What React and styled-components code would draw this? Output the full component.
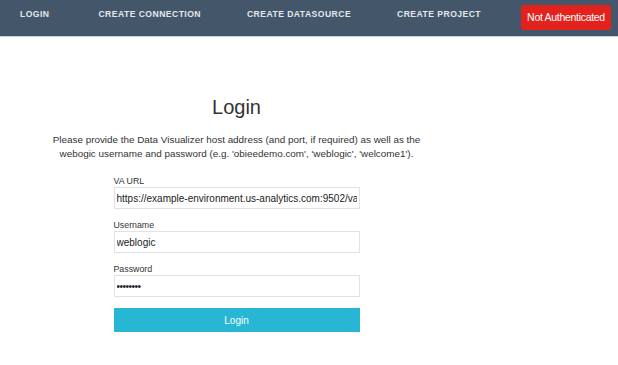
import React from "react";
import styled, { createGlobalStyle } from "styled-components";

const GlobalStyle = createGlobalStyle`
  html, body {
    margin: 0;
    padding: 0;
    background: #ffffff;
    font-family: "Liberation Sans", Arial, sans-serif;
  }
`;

const NavBar = styled.header`
  height: 37px;
  background: #44576a;
  border-bottom: 1px solid #c9d3da;
  display: flex;
  align-items: center;
  padding: 0 7px 0 20px;
  box-sizing: border-box;
`;

const NavLinks = styled.nav`
  display: flex;
  align-items: center;
  gap: 46px;
  flex: 1;
  margin-top: -8px;
`;

const NavLink = styled.a`
  color: #e3e8ec;
  font-size: 8.6px;
  font-weight: bold;
  letter-spacing: 0.45px;
  text-transform: uppercase;
  text-decoration: none;
  white-space: nowrap;
  cursor: pointer;

  &:first-child {
    margin-right: 3px;
  }
`;

const StatusBadge = styled.span`
  background: #e3221d;
  color: #ffffff;
  font-size: 10.5px;
  letter-spacing: -0.3px;
  white-space: nowrap;
  border-radius: 3px;
  height: 25px;
  width: 90px;
  box-sizing: border-box;
  display: flex;
  align-items: center;
  justify-content: center;
  margin-top: -2px;
`;

const Main = styled.main`
  width: 473px;
  display: flex;
  flex-direction: column;
  align-items: center;
  padding-top: 59px;
`;

const Title = styled.h1`
  margin: 0;
  font-size: 20px;
  font-weight: normal;
  color: #333333;
`;

const Intro = styled.p`
  margin: 14px 0 0;
  font-size: 9.9px;
  line-height: 14px;
  color: #333333;
  text-align: center;
`;

const Form = styled.form`
  width: 246px;
  margin-top: 15px;
  display: flex;
  flex-direction: column;
`;

const Field = styled.div`
  display: flex;
  flex-direction: column;
  margin-bottom: 11px;
`;

const Label = styled.label`
  font-size: 8.8px;
  line-height: 10px;
  color: #333333;
  margin-bottom: 1px;
`;

const Input = styled.input`
  height: 22px;
  box-sizing: border-box;
  border: 1px solid #e2e2e2;
  padding: 0 2px;
  font-family: "Liberation Sans", Arial, sans-serif;
  font-size: 10px;
  color: #222222;
  outline: none;
  letter-spacing: ${(p) => (p.type === "password" ? "-0.5px" : "normal")};
`;

const SubmitButton = styled.button`
  height: 24px;
  border: none;
  background: #27b6d4;
  color: #ffffff;
  font-family: "Liberation Sans", Arial, sans-serif;
  font-size: 10px;
  cursor: pointer;
`;

const links = ["Login", "Create Connection", "Create Datasource", "Create Project"];

export default function App() {
  return (
    <>
      <GlobalStyle />
      <NavBar>
        <NavLinks>
          {links.map((l) => (
            <NavLink key={l}>{l}</NavLink>
          ))}
        </NavLinks>
        <StatusBadge>Not Authenticated</StatusBadge>
      </NavBar>
      <Main>
        <Title>Login</Title>
        <Intro>
          Please provide the Data Visualizer host address (and port, if required) as well as the
          <br />
          webogic username and password (e.g. 'obieedemo.com', 'weblogic', 'welcome1').
        </Intro>
        <Form onSubmit={(e) => e.preventDefault()}>
          <Field>
            <Label>VA URL</Label>
            <Input defaultValue="https://example-environment.us-analytics.com:9502/va" />
          </Field>
          <Field>
            <Label>Username</Label>
            <Input defaultValue="weblogic" />
          </Field>
          <Field>
            <Label>Password</Label>
            <Input type="password" defaultValue="welcome1" />
          </Field>
          <SubmitButton type="submit">Login</SubmitButton>
        </Form>
      </Main>
    </>
  );
}
